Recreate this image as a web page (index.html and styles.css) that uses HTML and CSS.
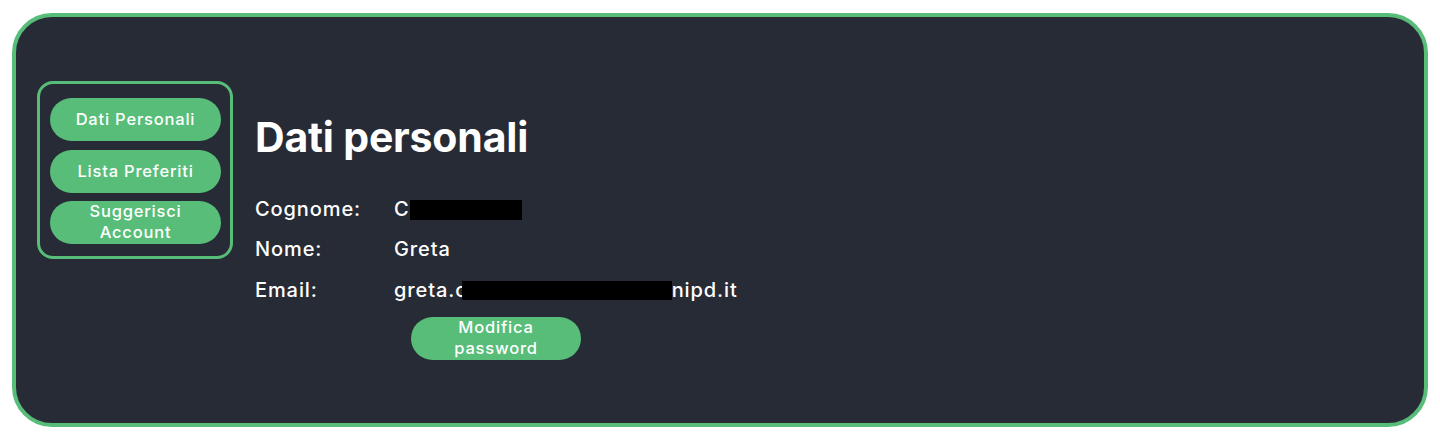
FILE: index.html
```html
<!DOCTYPE html>
<html lang="it">
<head>
<meta charset="utf-8">
<title>Dati personali</title>
<link rel="stylesheet" href="styles.css">
</head>
<body>
<div class="card">
  <nav class="sidebar">
    <button class="pill">Dati Personali</button>
    <button class="pill">Lista Preferiti</button>
    <button class="pill two">Suggerisci Account</button>
  </nav>
  <main class="main">
    <h1 class="title">Dati personali</h1>
    <div class="rows">
      <span class="label">Cognome:</span>
      <span class="value">C<span class="redact r1"></span></span>
      <span class="label">Nome:</span>
      <span class="value">Greta</span>
      <span class="label">Email:</span>
      <span class="value">greta.c<span class="redact r2"></span>nipd.it</span>
    </div>
    <button class="pill two pwd">Modifica password</button>
  </main>
</div>
</body>
</html>
```

FILE: styles.css
```css
html, body {
  margin: 0;
  background: #ffffff;
}
body {
  padding: 13px 12px;
  font-family: Inter, "Noto Sans", sans-serif;
}
.card {
  box-sizing: border-box;
  height: 414px;
  background: #272b35;
  border: 4px solid #57bd78;
  border-radius: 40px;
  display: flex;
  align-items: flex-start;
  padding: 64px 21px 0 21px;
}
.sidebar {
  box-sizing: border-box;
  width: 196px;
  border: 3px solid #57bd78;
  border-radius: 16px;
  padding: 14px 9px 12px 10px;
  display: flex;
  flex-direction: column;
  gap: 8.5px;
}
.pill {
  box-sizing: border-box;
  height: 43px;
  width: 100%;
  border: none;
  border-radius: 22px;
  background: #57bd78;
  color: #ffffff;
  font-family: Inter, "Noto Sans", sans-serif;
  font-weight: 500;
  font-size: 16.5px;
  line-height: 21px;
  letter-spacing: 0.8px;
  padding: 0 8px;
  text-align: center;
  display: flex;
  align-items: center;
  justify-content: center;
}
.pill.two {
  align-items: flex-start;
  padding: 0 14px;
  overflow: visible;
}
.main {
  margin-left: 22px;
  padding-top: 31px;
  display: flex;
  flex-direction: column;
  color: #ffffff;
}
.title {
  margin: 0;
  font-size: 41px;
  line-height: 50px;
  font-weight: 700;
  letter-spacing: -0.2px;
}
.rows {
  margin-top: 27px;
  display: grid;
  grid-template-columns: 139px auto;
  grid-auto-rows: 40.3px;
  align-items: center;
  font-size: 20px;
  font-weight: 500;
  letter-spacing: 0.9px;
}
.redact {
  display: inline-block;
  background: #000000;
}
.r1 {
  width: 112px;
  height: 20px;
  vertical-align: -4px;
}
.r2 {
  width: 210px;
  height: 19px;
  vertical-align: -3px;
  margin-left: -6px;
}
.pwd {
  width: 170px;
  margin-left: 156px;
  margin-top: 7px;
  padding-top: 1.5px;
}
```
